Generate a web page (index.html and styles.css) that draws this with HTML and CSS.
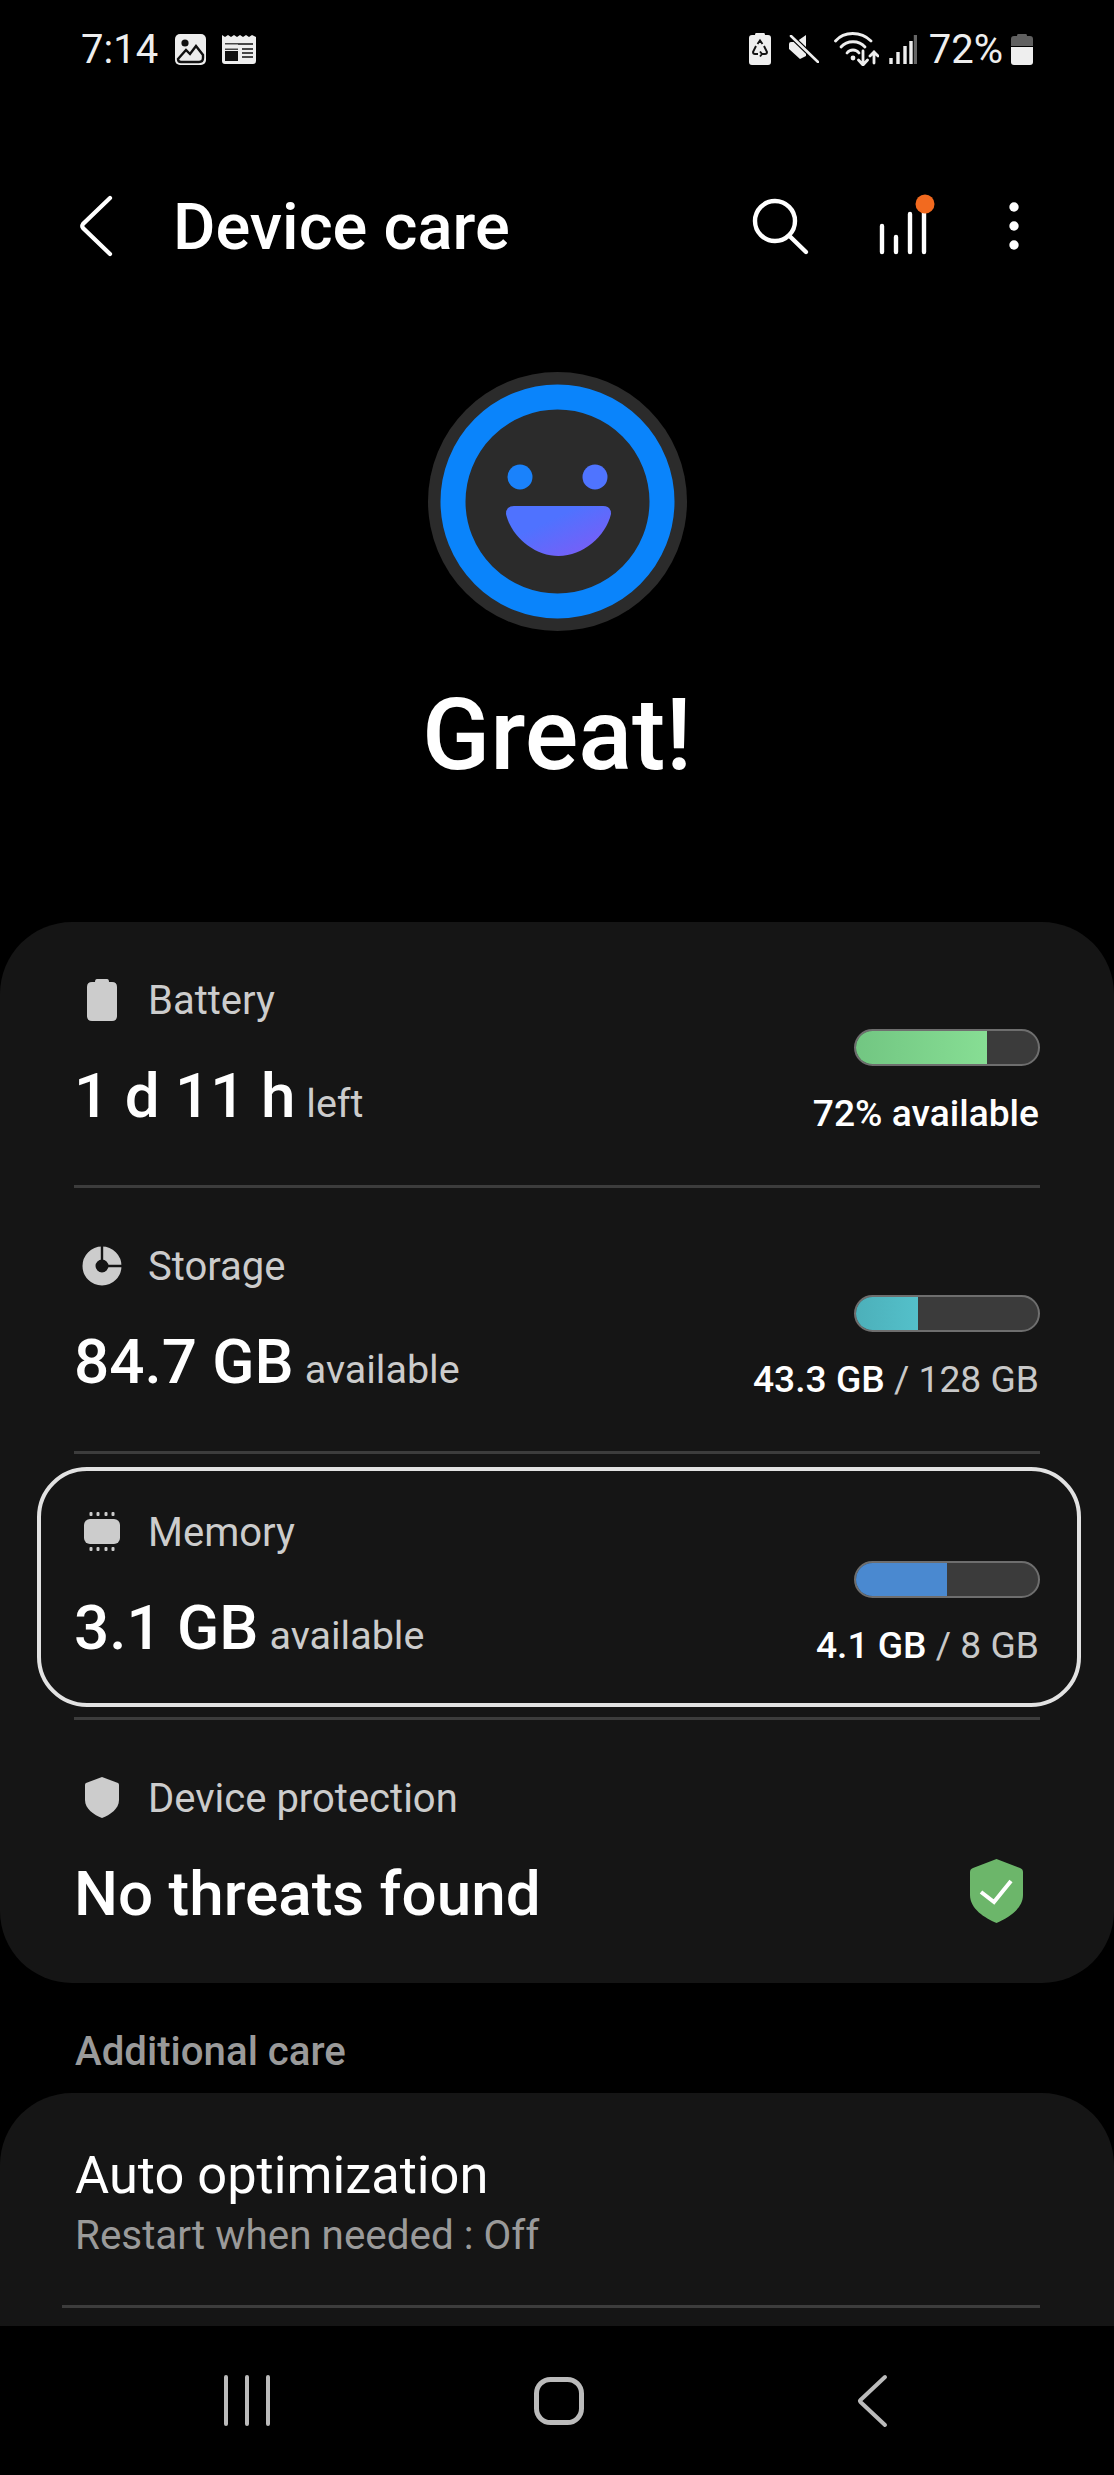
FILE: index.html
```html
<!DOCTYPE html>
<html lang="en">
<head>
    <meta charset="UTF-8">
    <meta name="viewport" content="width=device-width, initial-scale=1.0">
    <title>Device care</title>
    <link rel="stylesheet" href="styles.css">
</head>
<body>
    <div class="status-bar">
        <span class="clock">7:14</span>
        <svg class="st-image" width="31" height="31" viewBox="0 0 31 31">
            <rect width="31" height="31" rx="5" fill="#eee"/>
            <circle cx="10" cy="9" r="3.6" fill="#111"/>
            <path d="M3 25 L11 16 L15 20 L21 12 L28 21 V24 Q28 28 24 28 H6 Q3 28 3 25 Z" fill="#eee" stroke="#111" stroke-width="2.4"/>
        </svg>
        <svg class="st-news" width="34" height="29" viewBox="0 0 34 29">
            <path d="M0 0 L3 2 L6 0 L9 2 L12 0 L15 2 L18 0 L21 2 L24 0 L27 2 L30 0 L34 2 V26 Q34 29 31 29 H3 Q0 29 0 26 Z" fill="#eee"/>
            <path d="M3 9 H31 M3 14 H16 M20 14 H31 M20 18 H31 M20 22 H31" stroke="#111" stroke-width="1.6"/>
            <rect x="3" y="16" width="13" height="10" fill="#111"/>
            <rect x="3" y="9.5" width="13" height="4" fill="#eee"/>
        </svg>
        <svg class="st-recycle" width="22" height="32" viewBox="0 0 22 32">
            <path d="M7 0 H15 Q16 0 16 2 H19 Q22 2 22 5 V29 Q22 32 19 32 H3 Q0 32 0 29 V5 Q0 2 3 2 H6 Q6 0 7 0 Z" fill="#eee"/>
            <path d="M8.5 11 L11 7.5 L13.5 11 M15 13 L18 19 Q18 21 16 21 H13 M9 21 H6 Q4 21 4 19 L7 13 M11 18.5 L13 21 L11 23.5" fill="none" stroke="#111" stroke-width="1.9"/>
        </svg>
        <svg class="st-mute" width="30" height="28" viewBox="0 0 30 28">
            <path d="M0 9 Q0 7 2 7 H7 L17 0 V21 L11 24 L0 14 Z" fill="#eee"/>
            <path d="M2 1 L29 27" stroke="#000" stroke-width="5"/>
            <path d="M2 1 L29 27" stroke="#eee" stroke-width="2.6" stroke-linecap="round"/>
        </svg>
        <svg class="st-wifi" width="45" height="34" viewBox="0 0 45 34">
            <g fill="none" stroke="#eee" stroke-width="2.8" stroke-linecap="round">
                <path d="M1.5 9 C10 -1 27 -1 37 9"/>
                <path d="M7 15 C13 8 25 8 31 15"/>
                <path d="M13 21 C16 17 22 17 25 21"/>
                <path d="M29 19 V33 M24.5 28 L29 33 L33.5 28"/>
                <path d="M40 31 V20 M36 24 L40 20 L44 24"/>
            </g>
            <circle cx="19" cy="26" r="2.4" fill="#eee"/>
        </svg>
        <svg class="st-signal" width="28" height="29" viewBox="0 0 28 29">
            <g stroke-width="3.4">
                <path d="M2 29 V23 M9 29 V17 M16 29 V11 M22 29 V6" stroke="#eee"/>
                <path d="M26.5 29 V0" stroke="#666"/>
            </g>
        </svg>
        <span class="st-percent">72%</span>
        <svg class="st-battery" width="22" height="31" viewBox="0 0 22 31">
            <path d="M7 0 H15 Q16 0 16 2 H19 Q22 2 22 5 V12 H0 V5 Q0 2 3 2 H6 Q6 0 7 0 Z" fill="#606060"/>
            <path d="M0 13 H22 V28 Q22 31 19 31 H3 Q0 31 0 28 Z" fill="#eee"/>
        </svg>
    </div>

    <main class="content">
        <header class="app-bar">
            <svg class="back-icon" width="40" height="64" viewBox="0 0 40 64">
                <path d="M34 4 L7 30 Q5.5 32 7 34 L34 60" fill="none" stroke="#fff" stroke-width="4.2" stroke-linecap="round"/>
            </svg>
            <h1 class="app-title">Device care</h1>
            <svg class="search-icon" width="64" height="64" viewBox="0 0 64 64">
                <circle cx="27" cy="27" r="20" fill="none" stroke="#fff" stroke-width="4.4"/>
                <path d="M41.5 42 L58 58" stroke="#fff" stroke-width="4.4" stroke-linecap="round"/>
            </svg>
            <svg class="stats-icon" width="66" height="64" viewBox="0 0 66 64">
                <path d="M10 32 V58 M24 43 V58 M38 20 V58 M52 16 V58" stroke="#fff" stroke-width="4.4" stroke-linecap="round"/>
                <circle cx="53" cy="10" r="9.5" fill="#f26a1f"/>
            </svg>
            <svg class="more-icon" width="28" height="64" viewBox="0 0 28 64">
                <circle cx="14" cy="13" r="4.7" fill="#fff"/>
                <circle cx="14" cy="32" r="4.7" fill="#fff"/>
                <circle cx="14" cy="51" r="4.7" fill="#fff"/>
            </svg>
        </header>

        <section class="hero">
            <svg width="259" height="259" viewBox="0 0 259 259">
                <defs>
                    <linearGradient id="mouth" x1="0" y1="0" x2="1" y2="1">
                        <stop offset="0.35" stop-color="#4f72ff"/>
                        <stop offset="1" stop-color="#8259f5"/>
                    </linearGradient>
                </defs>
                <circle cx="129.5" cy="129.5" r="129.5" fill="#2b2b2b"/>
                <circle cx="129.5" cy="129.5" r="104.5" fill="none" stroke="#0a84fb" stroke-width="25"/>
                <circle cx="92" cy="105" r="12.5" fill="#1a82fb"/>
                <circle cx="167" cy="105" r="12.5" fill="#4f74ff"/>
                <path d="M86 134 H175 Q183 134 183 142 C178 164 155 184 130.5 184 C106 184 83 164 78 142 Q78 134 86 134 Z" fill="url(#mouth)"/>
            </svg>
            <h2 class="hero-title">Great!</h2>
        </section>

        <section class="card">
            <div class="row">
                <div class="row-main">
                    <div class="row-label">
                        <svg width="48" height="48" viewBox="0 0 48 48">
                            <path d="M19 3 H29 Q31 3 31 6 H34 Q39 6 39 11 V40 Q39 45 34 45 H14 Q9 45 9 40 V11 Q9 6 14 6 H17 Q17 3 19 3 Z" fill="#ccc"/>
                        </svg>
                        <span>Battery</span>
                    </div>
                    <div class="row-value"><span class="value-big">1 d 11 h</span> <span class="value-unit">left</span></div>
                </div>
                <div class="row-side">
                    <div class="bar"><div class="bar-fill fill-green" style="width: 72%"></div></div>
                    <div class="side-text"><b>72% available</b></div>
                </div>
            </div>
            <hr class="divider">
            <div class="row">
                <div class="row-main">
                    <div class="row-label">
                        <svg width="48" height="48" viewBox="0 0 48 48">
                            <circle cx="24" cy="24" r="13" fill="none" stroke="#ccc" stroke-width="13"/>
                            <path d="M24 24 V3 M24 24 H45" stroke="#151515" stroke-width="2.4"/>
                        </svg>
                        <span>Storage</span>
                    </div>
                    <div class="row-value"><span class="value-big">84.7 GB</span> <span class="value-unit">available</span></div>
                </div>
                <div class="row-side">
                    <div class="bar"><div class="bar-fill fill-teal" style="width: 34%"></div></div>
                    <div class="side-text"><b>43.3 GB</b> / 128 GB</div>
                </div>
            </div>
            <hr class="divider">
            <div class="row row-focused">
                <div class="row-main">
                    <div class="row-label">
                        <svg width="48" height="48" viewBox="0 0 48 48">
                            <rect x="6" y="11" width="36" height="25" rx="6" fill="#ccc"/>
                            <g fill="#ccc">
                                <rect x="11.5" y="4" width="3" height="4" rx="1"/>
                                <rect x="18.5" y="4" width="3" height="4" rx="1"/>
                                <rect x="26.5" y="4" width="3" height="4" rx="1"/>
                                <rect x="33.5" y="4" width="3" height="4" rx="1"/>
                                <rect x="11.5" y="39" width="3" height="4" rx="1"/>
                                <rect x="18.5" y="39" width="3" height="4" rx="1"/>
                                <rect x="26.5" y="39" width="3" height="4" rx="1"/>
                                <rect x="33.5" y="39" width="3" height="4" rx="1"/>
                            </g>
                        </svg>
                        <span>Memory</span>
                    </div>
                    <div class="row-value"><span class="value-big">3.1 GB</span> <span class="value-unit">available</span></div>
                </div>
                <div class="row-side">
                    <div class="bar"><div class="bar-fill fill-blue" style="width: 50%"></div></div>
                    <div class="side-text"><b>4.1 GB</b> / 8 GB</div>
                </div>
            </div>
            <hr class="divider">
            <div class="row">
                <div class="row-main">
                    <div class="row-label">
                        <svg width="48" height="48" viewBox="0 0 48 48">
                            <path d="M24 3 L40 9 Q41 9.5 41 11 V26 C41 35 32 41 24 44 C16 41 7 35 7 26 V11 Q7 9.5 8 9 Z" fill="#ccc"/>
                        </svg>
                        <span>Device protection</span>
                    </div>
                    <div class="row-value"><span class="value-big">No threats found</span></div>
                </div>
                <div class="row-side">
                    <svg class="safe-shield" width="53" height="64" viewBox="0 0 53 64">
                        <path d="M26.5 0 L50 9 Q53 10 53 13 V36 C53 50 38 59 26.5 64 C15 59 0 50 0 36 V13 Q0 10 3 9 Z" fill="#6cb66a"/>
                        <path d="M11 33 L24 43 L41 22" fill="none" stroke="#fff" stroke-width="4"/>
                    </svg>
                </div>
            </div>
        </section>

        <h3 class="section-title">Additional care</h3>

        <section class="card card-extra">
            <div class="extra-name">Auto optimization</div>
            <div class="extra-sub">Restart when needed : Off</div>
            <hr class="divider divider-extra">
        </section>
    </main>

    <nav class="nav-bar">
        <svg class="nav-recents" width="50" height="56" viewBox="0 0 50 56">
            <path d="M4 4 V51 M25 4 V51 M46 4 V51" stroke="#bbb" stroke-width="4" stroke-linecap="round"/>
        </svg>
        <svg class="nav-home" width="54" height="56" viewBox="0 0 54 56">
            <rect x="4.5" y="6.5" width="45" height="43" rx="14" fill="none" stroke="#bbb" stroke-width="5"/>
        </svg>
        <svg class="nav-back" width="32" height="56" viewBox="0 0 32 56">
            <path d="M29 4 L4.5 27 Q3.5 28 4.5 29 L29 52" fill="none" stroke="#bbb" stroke-width="4" stroke-linecap="round"/>
        </svg>
    </nav>
</body>
</html>
```

FILE: styles.css
```css
* {
    box-sizing: border-box;
}
html, body {
    margin: 0;
    background-color: #000;
}
body {
    width: 1114px;
    height: 2475px;
    display: flex;
    flex-direction: column;
    overflow: hidden;
    font-family: Roboto, "Liberation Sans", sans-serif;
    color: #fff;
}
svg {
    display: block;
    flex: none;
}

/* status bar */
.status-bar {
    height: 98px;
    flex: none;
    display: flex;
    align-items: center;
    padding: 0 81px;
    color: #eee;
}
.clock, .st-percent {
    font-size: 40px;
}
.st-image { margin-left: 17px; }
.st-news { margin-left: 16px; }
.st-recycle { margin-left: auto; }
.st-mute { margin-left: 18px; }
.st-wifi { margin-left: 15px; }
.st-signal { margin-left: 10px; }
.st-percent { margin-left: 12px; }
.st-battery { margin-left: 8px; }

.content {
    flex: 1;
    min-height: 0;
    overflow: hidden;
}

/* app bar */
.app-bar {
    height: 130px;
    margin-top: 63px;
    display: flex;
    align-items: center;
    padding: 0 86px 0 76px;
}
.app-title {
    margin: 2px 0 0 57px;
    font-size: 65px;
    font-weight: 500;
}
.search-icon { margin-left: auto; }
.stats-icon { margin-left: 60px; }
.more-icon { margin-left: 62px; }

/* hero */
.hero {
    display: flex;
    flex-direction: column;
    align-items: center;
    padding: 81px 0 131px;
}
.hero-title {
    margin: 48px 0 0;
    font-size: 100px;
    line-height: 112px;
    font-weight: 500;
}

/* cards */
.card {
    display: flow-root;
    background-color: #151515;
    border-radius: 72px;
}
.row {
    height: 240px;
    margin: 13px 33px 10px 37px;
    padding: 0 37px 0 33px;
    border: 4px solid transparent;
    border-radius: 50px;
    display: flex;
    justify-content: space-between;
}
.row-focused {
    border-color: #e2e2e2;
}
.row-main {
    padding-top: 37px;
}
.row-label {
    display: flex;
    align-items: center;
    height: 48px;
    font-size: 40px;
    color: #ccc;
}
.row-label svg {
    margin: 0 22px 0 4px;
}
.row-value {
    margin-top: 37px;
    line-height: 70px;
    white-space: nowrap;
}
.value-big {
    font-size: 62px;
    font-weight: 500;
}
.value-unit {
    margin-left: 7px;
    font-size: 39.5px;
    color: #ccc;
}
.row-side {
    padding-top: 90px;
}
.bar {
    width: 186px;
    height: 37px;
    margin-left: auto;
    background-color: #3b3b3b;
    border: 2px solid #6e6e6e;
    border-radius: 19px;
    overflow: hidden;
}
.bar-fill {
    height: 100%;
}
.fill-green { background: linear-gradient(to right, #72c682, #87de94); }
.fill-teal { background: linear-gradient(to right, #4cb0ba, #54c0ca); }
.fill-blue { background-color: #4a89d0; }
.side-text {
    margin-top: 25px;
    padding-right: 1px;
    font-size: 37.2px;
    line-height: 44px;
    text-align: right;
    color: #c8c8c8;
    white-space: nowrap;
}
.side-text b {
    font-weight: 500;
    color: #fff;
}
.safe-shield {
    margin: 32px 17px 0 0;
}
.divider {
    height: 3px;
    margin: 0 74px;
    border: 0;
    background-color: #3c3c3c;
}

/* additional care */
.section-title {
    margin: 0;
    padding: 47px 0 19px 75px;
    font-size: 40.2px;
    line-height: 44px;
    font-weight: 500;
    color: #9a9a9a;
}
.card-extra {
    height: 300px;
    padding: 52px 0 0 75px;
    border-radius: 72px 72px 0 0;
}
.extra-name {
    font-size: 52.4px;
    line-height: 60px;
}
.extra-sub {
    margin-top: 8px;
    font-size: 40.4px;
    line-height: 46px;
    color: #9a9a9a;
}
.divider-extra {
    margin: 46px 74px 0 -13px;
}

/* bottom nav */
.nav-bar {
    height: 149px;
    flex: none;
    display: flex;
    align-items: center;
    padding-left: 222px;
    background-color: #000;
}
.nav-home { margin-left: 260px; }
.nav-back { margin-left: 270px; }
```
